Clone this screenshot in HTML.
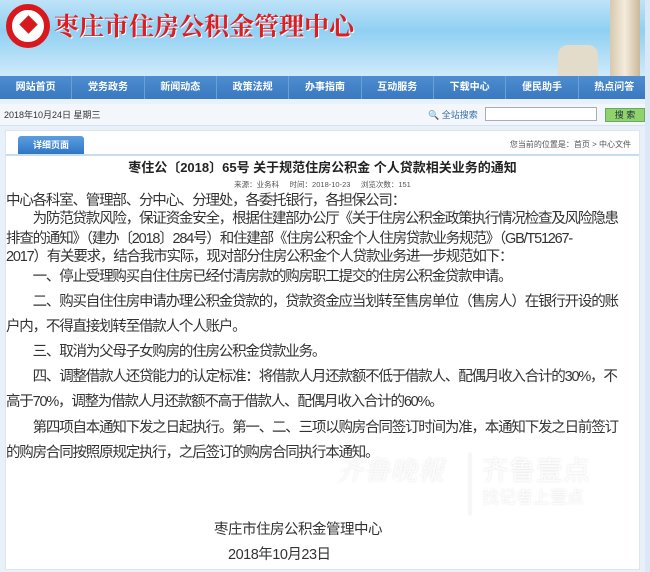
<!DOCTYPE html>
<html><head><meta charset="utf-8"><style>
*{margin:0;padding:0;box-sizing:border-box}
body{width:650px;height:572px;overflow:hidden;background:#e8f1fa;font-family:"Liberation Sans","Noto Sans CJK SC",sans-serif;position:relative}
.hdr{position:absolute;left:0;top:0;width:650px;height:76px;background:linear-gradient(180deg,#bfe3f8 0%,#8fd0f3 40%,#cfeafa 100%)}
.logo{position:absolute;left:6px;top:4px;width:44px;height:44px;border-radius:50%;border:6px solid #d8181c;background:#fff}
.logo:after{content:"";position:absolute;left:10px;top:8px;width:13px;height:13px;background:#d8181c;transform:rotate(45deg)}
.ttl{position:absolute;left:54px;top:7px;font-family:"Noto Serif CJK SC",serif;font-weight:bold;font-size:25px;color:#e01c20;text-shadow:1px 1px 0 #fff}
.tower{position:absolute;right:10px;top:0;width:30px;height:76px;background:linear-gradient(90deg,#d8c9ae,#f3ebdd,#c9b89a)}
.tower2{position:absolute;right:52px;top:45px;width:40px;height:31px;background:#e4dccb;border-radius:10px 10px 0 0}
.nav{position:absolute;left:0;top:76px;width:650px;height:23px;background:linear-gradient(#4d8dd0,#3a78bf);display:flex}
.nav div{flex:1;color:#fff;font-size:10px;font-weight:bold;text-align:center;line-height:23px;border-right:1px solid #6aa0d8}
.bar{position:absolute;left:0;top:104px;width:645px;height:22px;background:#f3f7fb;border-bottom:1px solid #d6e3ef;font-size:9px;color:#333;line-height:22px;padding-left:4px}
.srch{position:absolute;left:428px;top:0;color:#3b6ea5}
.inp{position:absolute;left:485px;top:3px;width:112px;height:14px;border:1px solid #aab;background:#fff}
.btn{position:absolute;left:605px;top:4px;width:40px;height:14px;background:#8fd36a;border:1px solid #6a6;font-size:9px;line-height:12px;text-align:center;color:#234}
.box{position:absolute;left:5px;top:130px;width:635px;height:440px;background:#fff;border:1px solid #dde6ef}
.tab{position:absolute;left:12px;top:5px;width:66px;height:18px;background:linear-gradient(#5b9ee0,#2f76c4);border-radius:3px 3px 0 0;color:#fff;font-size:9px;font-weight:bold;text-align:center;line-height:18px}
.tabline{position:absolute;left:0;top:23px;width:633px;height:2px;background:#c8dcef}
.crumb{position:absolute;right:8px;top:8px;font-size:8px;color:#555}
.h1{position:absolute;left:0;width:633px;top:26px;text-align:center;font-weight:bold;font-size:13px;color:#222}
.meta{position:absolute;left:0;width:633px;top:48px;text-align:center;font-size:7.5px;color:#555}
.t{position:absolute;left:0;font-size:14.5px;color:#333;white-space:nowrap;line-height:18px;letter-spacing:-1.2px}
.wm{position:absolute;font-size:27px;color:#fcfcfc;text-shadow:0 0 2px #e2e2e2}
.wm2{position:absolute;font-size:17px;color:#fcfcfc;text-shadow:0 0 2px #e2e2e2}
.rs{position:absolute;left:645px;top:0;width:5px;height:572px;background:#dbe9f6}
</style></head><body>
<div class="hdr"><div class="logo"></div><div class="ttl">枣庄市住房公积金管理中心</div><div class="tower2"></div><div class="tower"></div></div>
<div class="nav"><div>网站首页</div><div>党务政务</div><div>新闻动态</div><div>政策法规</div><div>办事指南</div><div>互动服务</div><div>下载中心</div><div>便民助手</div><div style="border:0">热点问答</div></div>
<div class="bar">2018年10月24日 星期三<span class="srch">🔍 全站搜索</span><div class="inp"></div><div class="btn">搜 索</div></div>
<div class="box">
<div class="tab">详细页面</div><div class="tabline"></div>
<div class="crumb">您当前的位置是：首页 &gt; 中心文件</div>
<div class="h1">枣住公〔2018〕65号 关于规范住房公积金 个人贷款相关业务的通知</div>
<div class="meta">来源：业务科 &nbsp;&nbsp;&nbsp; 时间：2018-10-23 &nbsp;&nbsp;&nbsp; 浏览次数：151</div>
<div class="t" style="top:61px">中心各科室、管理部、分中心、分理处，各委托银行，各担保公司：</div>
<div class="t" style="top:79px">&#12288;&#12288;为防范贷款风险，保证资金安全，根据住建部办公厅《关于住房公积金政策执行情况检查及风险隐患</div>
<div class="t" style="top:99px">排查的通知》（建办〔2018〕284号）和住建部《住房公积金个人住房贷款业务规范》（GB/T51267-</div>
<div class="t" style="top:117px">2017）有关要求，结合我市实际，现对部分住房公积金个人贷款业务进一步规范如下：</div>
<div class="t" style="top:137px">&#12288;&#12288;一、停止受理购买自住住房已经付清房款的购房职工提交的住房公积金贷款申请。</div>
<div class="t" style="top:162px">&#12288;&#12288;二、购买自住住房申请办理公积金贷款的，贷款资金应当划转至售房单位（售房人）在银行开设的账</div>
<div class="t" style="top:187px">户内，不得直接划转至借款人个人账户。</div>
<div class="t" style="top:212px">&#12288;&#12288;三、取消为父母子女购房的住房公积金贷款业务。</div>
<div class="t" style="top:237px">&#12288;&#12288;四、调整借款人还贷能力的认定标准：将借款人月还款额不低于借款人、配偶月收入合计的30%，不</div>
<div class="t" style="top:262px">高于70%，调整为借款人月还款额不高于借款人、配偶月收入合计的60%。</div>
<div class="t" style="top:288px">&#12288;&#12288;第四项自本通知下发之日起执行。第一、二、三项以购房合同签订时间为准，本通知下发之日前签订</div>
<div class="t" style="top:313px">的购房合同按照原规定执行，之后签订的购房合同执行本通知。</div>
<div class="wm" style="left:330px;top:318px;font-family:'Noto Serif CJK SC',serif;font-style:italic">齐鲁晚報</div>
<div style="position:absolute;left:463px;top:322px;width:2px;height:62px;background:#f6f6f6;box-shadow:0 0 2px #e2e2e2"></div>
<div class="wm" style="left:476px;top:318px">齐鲁壹点</div>
<div class="wm2" style="left:476px;top:352px">找记者上壹点</div>
<div class="t" style="top:390px;left:208px;letter-spacing:-0.5px">枣庄市住房公积金管理中心</div>
<div class="t" style="top:415px;left:222px;letter-spacing:-0.5px">2018年10月23日</div>
</div>
<div class="rs"></div>
</body></html>
